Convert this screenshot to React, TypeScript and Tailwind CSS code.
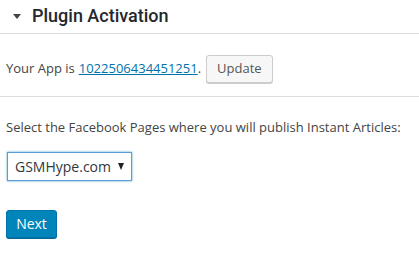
import React from 'react';

const App: React.FC = () => {
    return (
        <div className="w-[419px] h-[267px] bg-white overflow-hidden text-[13px] text-[#444] font-['Open_Sans',sans-serif]">
            <div className="h-[34px] flex items-center border-b border-[#ddd]">
                <svg className="ml-[13px] mr-[11px]" width="8" height="5" viewBox="0 0 8 5">
                    <path d="M0 0h8L4 5z" fill="#444" />
                </svg>
                <h2 className="text-[18px] leading-none font-medium text-[#23282d] pb-[2px] font-['Roboto',sans-serif]">Plugin Activation</h2>
            </div>

            <div className="flex items-center pl-[6px] pt-[21px] pb-[13px] border-b border-[#ddd]">
                <span>Your App is </span>
                <a href="#" className="ml-[4px] text-[#0073aa] underline">1022506434451251</a>
                <span>.</span>
                <button className="ml-[5px] h-[28px] px-[10px] rounded-[3px] border border-[#ccc] bg-[#f7f7f7] shadow-[0_1px_0_#ccc] text-[#555]">
                    Update
                </button>
            </div>

            <div className="pl-[6px] pt-[21px]">
                <p>Select the Facebook Pages where you will publish Instant Articles:</p>
                <div className="mt-[14px] ml-[1px] w-[125px] h-[29px] flex items-center justify-between pl-[7px] pr-[7px] border border-[#5b9dd9] shadow-[0_0_2px_rgba(30,140,190,0.8)] text-[14px] text-[#32373c]">
                    <span>GSMHype.com</span>
                    <svg width="6" height="7" viewBox="0 0 6 7">
                        <path d="M0 0h6L3 7z" fill="#222" />
                    </svg>
                </div>
                <button className="mt-[29px] w-[51px] h-[28px] rounded-[3px] border border-[#0073aa] bg-[#0085ba] shadow-[0_1px_0_#006799] text-white text-[14px]">
                    Next
                </button>
            </div>
        </div>
    );
};

export default App;
